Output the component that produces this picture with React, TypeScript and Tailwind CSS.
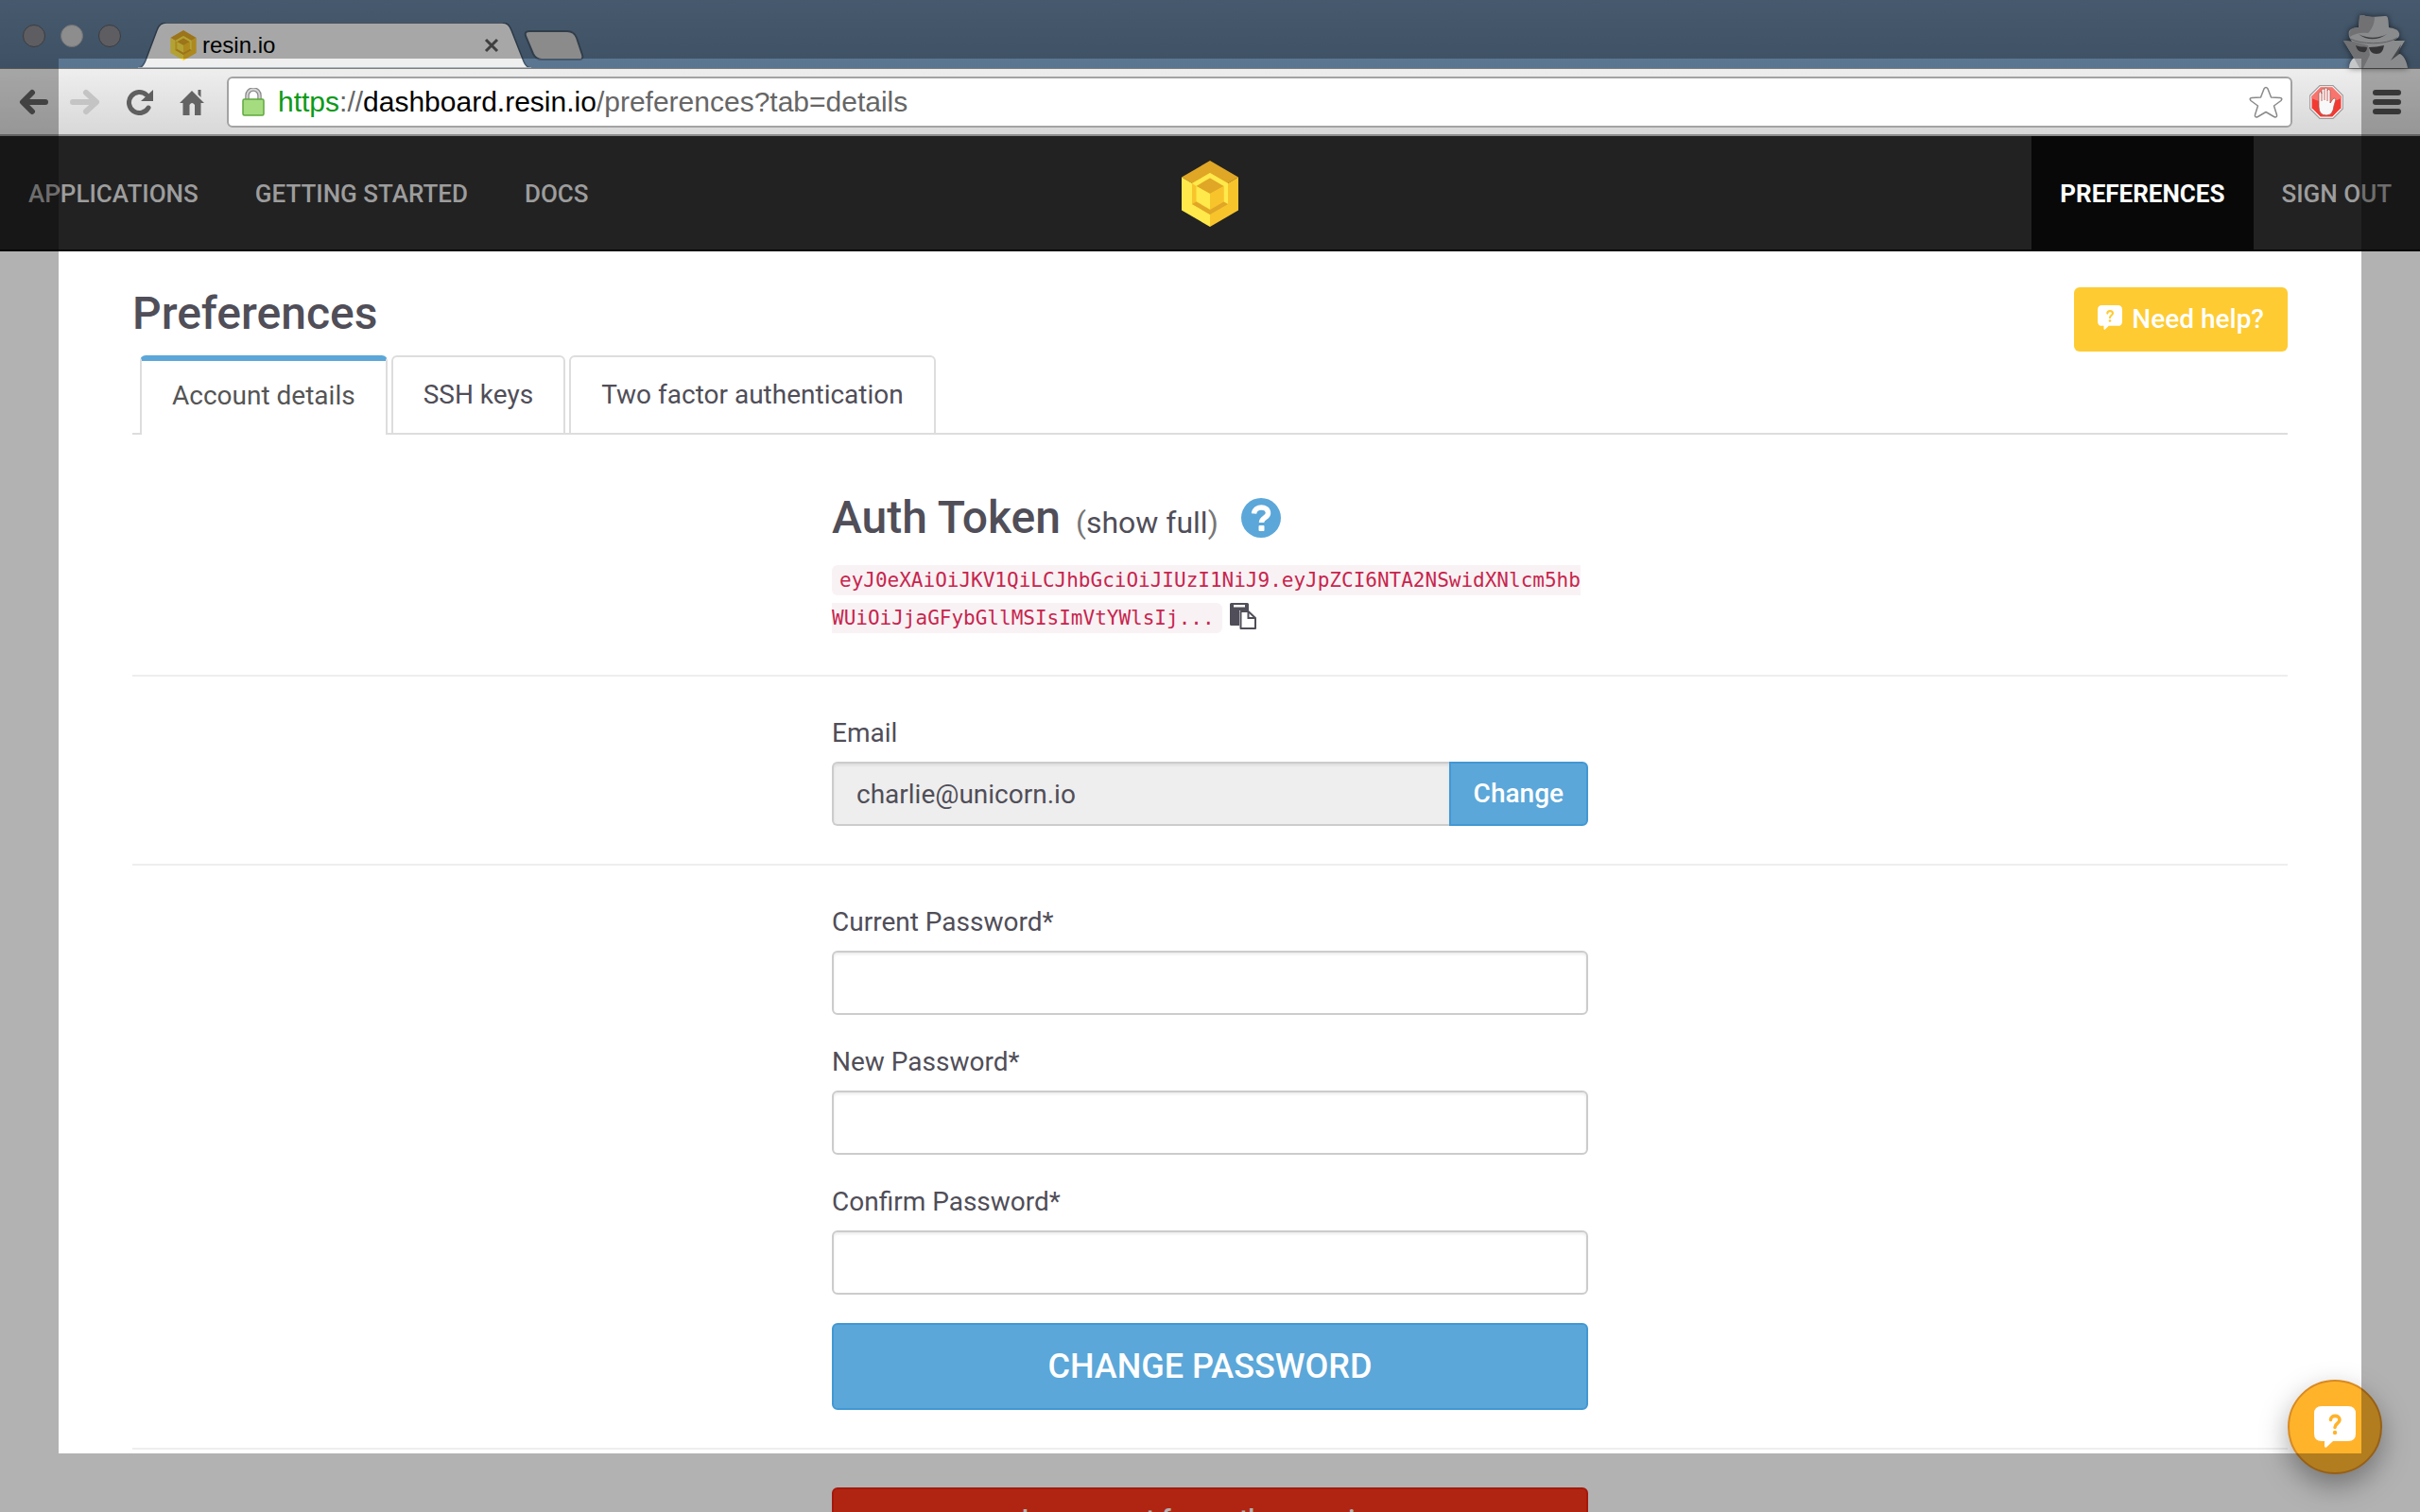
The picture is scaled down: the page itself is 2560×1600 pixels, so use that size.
import React from 'react';

const TOKEN =
  'eyJ0eXAiOiJKV1QiLCJhbGciOiJIUzI1NiJ9.eyJpZCI6NTA2NSwidXNlcm5hbWUiOiJjaGFybGllMSIsImVtYWlsIj...';

function CubeLogo({ className }: { className: string }) {
  return (
    <svg viewBox="0 0 60 70" className={className} aria-hidden="true">
      <path d="M30 0 60 17.5 30 35 0 17.5Z" fill="#e0a626" />
      <path d="M0 17.5 30 35V70L0 52.5Z" fill="#ffe94b" />
      <path d="M60 17.5 30 35V70L60 52.5Z" fill="#f8c42c" />
      <path d="M30 13 49 24V46L30 57 11 46V24Z" fill="#f8c42c" />
      <path d="M30 13 49 24V46L44.500 43.500V27L30 18.500Z" fill="#ffe94b" />
      <path d="M30 13 11 24 15.500 27 30 18.500Z" fill="#ffe94b" />
      <path d="M11 46 15.500 43.500 30 52 44.500 43.500 49 46 30 57Z" fill="#e0a626" />
      <path d="M30 18.500 44.500 27 30 35 15.500 27Z" fill="#e0a626" />
      <path d="M15.500 27 30 35V51.500L15.500 43Z" fill="#ffe94b" />
      <path d="M44.500 27 30 35V51.500L44.500 43Z" fill="#f8c42c" />
    </svg>
  );
}

function Incognito() {
  return (
    <svg viewBox="0 0 72 58" className="h-[58px] w-[72px] drop-shadow-[0_0_3px_rgba(0,0,0,0.6)]" aria-hidden="true">
      <path
        d="M7 58C7 53 9 50 12 47L1 29 10 30C7 26 6 22 7 19 9 16 13 15 17 15L18 4C18 1 22 2 25 3 31 5 37 3 45 3 48 3 48 5 48.500 8L49 15C54 16 59 17 60 21 61 25 58 27 54 29L66 29 57 44 61 43C66 46 68 52 69 58Z"
        fill="#c6c7c9"
      />
      <path d="M17 15 18 4C18 1 22 2 25 3L34 4C34 11 31 17 27 21 19 20 12 22 8 25 6 21 8 15 17 15ZM1 29 12 30 27 34 29 44 22 58H18L12 47Z" fill="#a2a3a6" />
      <path d="M8 27C20 33 45 34 58 26" fill="none" stroke="#88898c" strokeWidth="1" />
      <path d="M17 22C26 27 38 27 47 22 38 29 25 29 17 22Z" fill="#555659" />
      <path d="M14 34C18 36 22 35 26 36 26 40 24 42 21 41 17 41 15 38 14 34ZM28 36C33 36 39 35 44 34 43 40 41 43 36 43 31 43 29 40 28 36Z" fill="#4c4d50" />
      <path d="M62 33 51 50 59 44" fill="#66676a" />
    </svg>
  );
}

function ChatQuestion({ className, mark }: { className: string; mark: string }) {
  return (
    <svg viewBox="0 0 44 44" className={className} aria-hidden="true">
      <path d="M8 0H36Q44 0 44 8V29Q44 37 36 37H20L13 43.500Q11 44.500 11 42V37H8Q0 37 0 29V8Q0 0 8 0Z" fill="#fff" />
      <path d="M17.500 14.500C17.500 9 27 9 27 14.500 27 18.500 22 18 22 22.500" fill="none" stroke={mark} strokeWidth="3.600" strokeLinecap="round" />
      <circle cx="22" cy="28" r="2.200" fill={mark} />
    </svg>
  );
}

function TitleBar() {
  return (
    <header className="flex h-[72px] shrink-0 items-end bg-linear-to-b from-[#66809d] to-[#5a7590] pr-2.5">
      <div className="flex gap-4 self-center pt-1 pl-6">
        <button aria-label="Close window" className="size-6 rounded-full border border-[#55555a] bg-[#87868b]" />
        <button aria-label="Minimise window" className="size-6 rounded-full border border-[#a5a5a8] bg-[#cacacc]" />
        <button aria-label="Zoom window" className="size-6 rounded-full border border-[#55555a] bg-[#87868b]" />
      </div>
      <div className="relative ml-[18px] flex h-12 w-[416px] items-center pr-[34px] pl-[34px]">
        <svg viewBox="0 0 416 48" preserveAspectRatio="none" className="absolute inset-0 size-full" aria-hidden="true">
          <path d="M0 48C5 47 6 44 8 40L20 8C22 2 25 0 30 0H385C391 0 393 3 395 8L408 41C410 46 412 47 416 48Z" fill="#efefef" stroke="#3f5265" strokeWidth="1.500" />
          <path d="M0 47.500H416V48H0Z" fill="#efefef" />
        </svg>
        <CubeLogo className="relative h-8 w-7" />
        <span className="relative ml-1.5 flex-1 font-['Liberation_Sans',Arial,sans-serif] text-2xl leading-8 text-black">resin.io</span>
        <button aria-label="Close tab" className="relative">
          <svg viewBox="0 0 16 16" className="size-4">
            <path d="M2 2 14 14M14 2 2 14" stroke="#5b5b5b" strokeWidth="3" />
          </svg>
        </button>
      </div>
      <button aria-label="New tab" className="mb-2">
        <svg viewBox="0 0 64 32" className="-ml-2 h-8 w-16">
          <path d="M6 1H46C51 1 54 3 56 8L62 26C63 29 62 31 59 31H19C14 31 12 29 10 25L2 6C1 3 2 1 6 1Z" fill="#c8c8c8" stroke="#46586b" strokeWidth="2" />
        </svg>
      </button>
      <div className="ml-auto">
        <Incognito />
      </div>
    </header>
  );
}

function Toolbar() {
  return (
    <div className="flex h-[72px] shrink-0 items-center border-t border-b-2 border-t-[#7d7d7d] border-b-[#8d8d8d] bg-linear-to-b from-[#eeeeee] to-[#d8d8d8] pr-5 pl-5">
      <div className="flex shrink-0 items-center">
        <button aria-label="Back">
          <svg viewBox="0 0 32 28" className="h-7 w-8" fill="none" stroke="#5f5f5f" strokeWidth="6" strokeLinecap="round" strokeLinejoin="round">
            <path d="M28 14H5M14 4 4 14 14 24" />
          </svg>
        </button>
        <button aria-label="Forward" className="ml-[22px]">
          <svg viewBox="0 0 32 28" className="h-7 w-8" fill="none" stroke="#c4c4c4" strokeWidth="6" strokeLinecap="round" strokeLinejoin="round">
            <path d="M3 14H26M17 4 28 14 17 24" />
          </svg>
        </button>
        <button aria-label="Reload" className="ml-7">
          <svg viewBox="0 0 28 28" className="size-7">
            <path d="M23 20A11 11 0 1 1 21 6.500" fill="none" stroke="#5f5f5f" strokeWidth="5" strokeLinecap="round" />
            <path d="M28 1V13H15Z" fill="#5f5f5f" />
          </svg>
        </button>
        <button aria-label="Home" className="ml-7">
          <svg viewBox="0 0 26 28" className="h-7 w-[26px]">
            <path d="M13 2 26 15H22.500V28H16V17Q13 13 10.500 17V28H3.500V15H0Z" fill="#636363" />
            <path d="M19.500 1H22.500V9L19.500 6Z" fill="#636363" />
          </svg>
        </button>
      </div>
      <div className="ml-6 flex h-[54px] flex-1 items-center rounded-md border-2 border-[#a3a3a3] bg-white pr-2 pl-3.5">
        <svg viewBox="0 0 24 30" className="h-[30px] w-6 shrink-0" aria-hidden="true">
          <path d="M5.500 14V8a6.500 6.500 0 0 1 13 0v6" fill="none" stroke="#8b8b8b" strokeWidth="4.500" />
          <path d="M5.500 14V8a6.500 6.500 0 0 1 13 0v6" fill="none" stroke="#d6d6d6" strokeWidth="2" />
          <rect x="1" y="12" width="22" height="17" rx="1.500" fill="#a5dc80" stroke="#5fa83c" strokeWidth="1.500" />
        </svg>
        <span className="ml-3.5 flex-1 font-['Liberation_Sans',Arial,sans-serif] text-[30px] leading-9 whitespace-nowrap text-[#666]">
          <span className="text-[#0b9a17]">https</span>://<span className="text-black">dashboard.resin.io</span>/preferences?tab=details
        </span>
        <button aria-label="Bookmark this page">
          <svg viewBox="0 0 36 34" className="h-[34px] w-9">
            <path
              d="M16 3Q18 0 20 3L23.500 12 33 12.500Q36 13 34 15.500L26.500 21 29.500 30.500Q30 34 26.500 32.500L18 27.500 9.500 32.500Q6 34 6.500 30.500L9.500 21 2 15.500Q0 13 3 12.500L12.500 12Z"
              fill="#fff"
              stroke="#8a8a8a"
              strokeWidth="1.500"
              strokeLinejoin="round"
            />
          </svg>
        </button>
      </div>
      <button aria-label="Ad blocker" className="ml-[18px]">
        <svg viewBox="0 0 36 36" className="size-9">
          <path d="M11 .7H25L35.300 11V25L25 35.300H11L.7 25V11Z" fill="#fff" stroke="#9b9b9b" strokeWidth="1.200" />
          <path d="M11.700 2.500H24.300L33.500 11.700V24.300L24.300 33.500H11.700L2.500 24.300V11.700Z" fill="#f23a32" />
          <path d="M11.700 2.500H24.300L33.500 11.700V14Q18 22 2.500 14V11.700Z" fill="#f7756e" />
          <path
            d="M10 21V9Q10 7 11.500 7T13 9V5.500Q13 4 14.500 4T16 5.500V4.500Q16 3 17.500 3T19 4.500V6Q19 4.500 20.500 4.500T22 6.500V19L25 14.500Q27 13.500 28 15L26 22Q25 32 18 32 10 32 10 23Z"
            fill="#f8f8f8"
            stroke="#a9554f"
            strokeWidth=".8"
          />
          <path d="M13 8V17M16 6V16M19 6V17" stroke="#c8655f" strokeWidth="1" />
        </svg>
      </button>
      <button aria-label="Menu" className="ml-[31px] flex flex-col gap-1">
        <span className="h-1.5 w-[30px] rounded-full bg-[#505050]" />
        <span className="h-1.5 w-[30px] rounded-full bg-[#505050]" />
        <span className="h-1.5 w-[30px] rounded-full bg-[#505050]" />
      </button>
    </div>
  );
}

function NavLink({ children, active = false }: { children: React.ReactNode; active?: boolean }) {
  return (
    <a
      href="#"
      className={
        active
          ? 'flex items-center bg-[#080808] px-[30px] pt-0.5 font-bold text-white'
          : 'flex items-center px-[30px] pt-0.5 font-medium text-[#9d9d9d]'
      }
    >
      {children}
    </a>
  );
}

function Nav() {
  return (
    <nav className="grid h-[122px] shrink-0 grid-cols-[1fr_auto_1fr] border-b-2 border-[#080808] bg-[#222] text-[26px]">
      <div className="flex">
        <NavLink>APPLICATIONS</NavLink>
        <NavLink>GETTING STARTED</NavLink>
        <NavLink>DOCS</NavLink>
      </div>
      <a href="#" aria-label="resin.io home" className="flex items-center pt-0.5">
        <CubeLogo className="h-[70px] w-[60px]" />
      </a>
      <div className="flex justify-end">
        <NavLink active>PREFERENCES</NavLink>
        <NavLink>SIGN OUT</NavLink>
      </div>
    </nav>
  );
}

function Tab({ children, active = false }: { children: React.ReactNode; active?: boolean }) {
  return (
    <button
      role="tab"
      aria-selected={active}
      className={
        active
          ? '-mb-0.5 h-[84px] rounded-t-md border-x-2 border-t-[6px] border-x-[#ddd] border-t-[#5ba7d9] bg-white px-8 pb-1 text-[#555]'
          : '-mb-0.5 h-[84px] rounded-t-md border-2 border-[#ddd] bg-white px-8'
      }
    >
      {children}
    </button>
  );
}

function PasswordField({ id, label }: { id: string; label: string }) {
  return (
    <div>
      <label htmlFor={id} className="mb-2.5 block leading-10">
        {label}
      </label>
      <input
        id={id}
        type="password"
        className="block h-[68px] w-full rounded-md border-2 border-[#ccc] bg-white px-6 shadow-[inset_0_2px_3px_rgba(0,0,0,0.08)] outline-none"
      />
    </div>
  );
}

function Rule() {
  return <hr className="my-10 border-t-2 border-[#eee]" />;
}

export default function App() {
  return (
    <div className="relative flex h-screen flex-col overflow-hidden bg-white font-[Roboto,sans-serif] text-[28px] text-[#504e58]">
      <TitleBar />
      <Toolbar />
      <Nav />

      <main className="min-h-0 flex-1 overflow-hidden px-[140px] pt-[38px]">
        <div className="mb-1 flex items-start justify-between">
          <h1 className="text-5xl leading-[56px] font-medium">Preferences</h1>
          <button className="flex h-[68px] items-center gap-2.5 rounded-md bg-[#fecb32] px-[25px] font-medium text-white">
            <ChatQuestion className="mb-1 size-[26px]" mark="#fecb32" />
            Need help?
          </button>
        </div>

        <div role="tablist" className="flex gap-1 border-b-2 border-[#ddd] pl-2">
          <Tab active>Account details</Tab>
          <Tab>SSH keys</Tab>
          <Tab>Two factor authentication</Tab>
        </div>

        <section className="mx-auto mt-[60px] w-full max-w-[800px]">
          <h2 className="flex items-baseline text-5xl leading-[56px] font-medium">
            Auth Token
            <span className="ml-4 text-[32px] leading-8 font-normal text-[#777]">
              (
              <a href="#" className="text-[#504e58]">
                show full
              </a>
              )
            </span>
            <button aria-label="About auth tokens" className="ml-6 self-center">
              <svg viewBox="0 0 42 42" className="block size-[42px]">
                <circle cx="21" cy="21" r="21" fill="#5ba7d9" />
                <path d="M13.500 16.500C14.500 7.500 28.500 8 28.500 16 28.500 21 21.500 20.500 21.500 26" fill="none" stroke="#fff" strokeWidth="5.500" />
                <rect x="18.500" y="29" width="6" height="6" rx="1" fill="#fff" />
              </svg>
            </button>
          </h2>
          <p className="mt-[18px] font-['DejaVu_Sans_Mono',monospace] text-[21px] leading-10">
            <code className="rounded-md bg-[#f9f2f4] px-2 py-1 font-['DejaVu_Sans_Mono',monospace] break-all text-[#c7254e]">{TOKEN}</code>
            <button aria-label="Copy token" className="ml-2 inline-flex h-10 items-center pb-1 align-top">
              <svg viewBox="0 0 28 28" className="size-7">
                <path d="M1.500 0H18.500Q20 0 20 1.500V8H10V24H1.500Q0 24 0 22.500V1.500Q0 0 1.500 0Z" fill="#504e58" />
                <rect x="4" y="2" width="12" height="2.500" fill="#fff" />
                <path d="M11.500 9H19.500L27 16V27H11.500Z" fill="#fff" stroke="#504e58" strokeWidth="2" strokeLinejoin="round" />
                <path d="M19.500 9V16H27" fill="none" stroke="#504e58" strokeWidth="2" />
              </svg>
            </button>
          </p>
        </section>

        <Rule />

        <section className="mx-auto w-full max-w-[800px]">
          <label htmlFor="email" className="mb-2.5 block leading-10">
            Email
          </label>
          <div className="flex">
            <input
              id="email"
              type="email"
              readOnly
              value="charlie@unicorn.io"
              className="h-[68px] min-w-0 flex-1 rounded-l-md border-2 border-r-0 border-[#ccc] bg-[#eee] px-6 shadow-[inset_0_2px_3px_rgba(0,0,0,0.08)] outline-none"
            />
            <button className="h-[68px] rounded-r-md border-2 border-[#4298d3] bg-[#5ba7d9] px-6 font-medium text-white">Change</button>
          </div>
        </section>

        <Rule />

        <form className="mx-auto flex w-full max-w-[800px] flex-col gap-[30px]">
          <PasswordField id="current" label="Current Password*" />
          <PasswordField id="new" label="New Password*" />
          <PasswordField id="confirm" label="Confirm Password*" />
          <button type="button" className="h-[92px] rounded-md border-2 border-[#4298d3] bg-[#5ba7d9] text-4xl font-medium text-white">
            CHANGE PASSWORD
          </button>
        </form>

        <Rule />

        <div className="mx-auto w-full max-w-[800px]">
          <button className="h-[68px] w-full rounded-md border-2 border-[#ee2211] bg-[#fc3519] font-medium text-white">
            Log me out from other sessions
          </button>
        </div>
      </main>

      <button
        aria-label="Open support chat"
        className="absolute right-10 bottom-10 flex size-[100px] items-center justify-center rounded-full border-2 border-[#d98a20] bg-[#ffb32b] shadow-[0_12px_30px_rgba(0,0,0,0.35)]"
      >
        <ChatQuestion className="size-11" mark="#ffb32b" />
      </button>

      <div className="pointer-events-none absolute inset-0 border-[62px] border-black/30" />
    </div>
  );
}
